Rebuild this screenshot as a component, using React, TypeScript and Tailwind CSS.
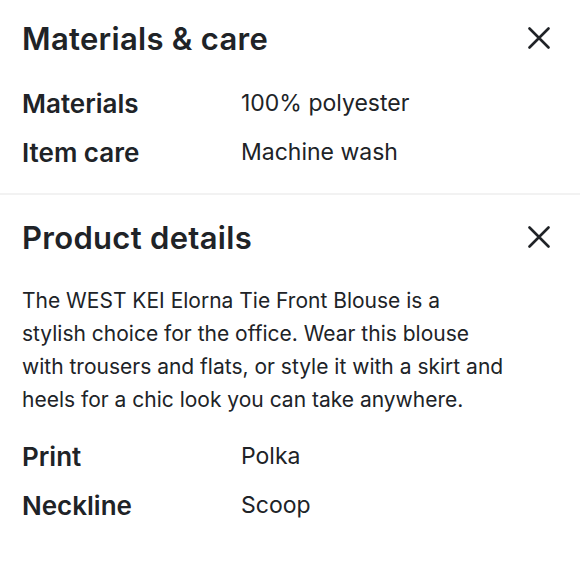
const font = { fontFamily: 'Inter, "Noto Sans", sans-serif' };

function CloseIcon() {
  return (
    <svg width="22" height="22" viewBox="0 0 22 22" className="text-[#202327]" fill="none">
      <path d="M1.5 1.5 L20.5 20.5 M20.5 1.5 L1.5 20.5" stroke="currentColor" strokeWidth="2.6" strokeLinecap="round" />
    </svg>
  );
}

function SpecRow({ label, value }: { label: string; value: string }) {
  return (
    <div className="flex items-center h-[49px]">
      <div className="w-[219px] text-[26px] font-semibold text-[#202327]">{label}</div>
      <div className="text-[23px] text-[#202327]">{value}</div>
    </div>
  );
}

function SectionHeader({ title }: { title: string }) {
  return (
    <div className="flex items-center justify-between h-[40px]">
      <h2 className="text-[31px] font-semibold tracking-[0.3px] text-[#202327] leading-none">{title}</h2>
      <CloseIcon />
    </div>
  );
}

export default function App() {
  return (
    <div className="w-[580px] h-[580px] bg-white overflow-hidden" style={font}>
      {/* Materials & care */}
      <section className="pl-[22px] pr-[30px] pt-[18px] pb-[16px]">
        <SectionHeader title="Materials & care" />
        <div className="mt-[21px]">
          <SpecRow label="Materials" value="100% polyester" />
          <SpecRow label="Item care" value="Machine wash" />
        </div>
      </section>

      <div className="h-[2px] bg-[#f2f2f2]" />

      {/* Product details */}
      <section className="pl-[22px] pr-[30px] pt-[22px]">
        <SectionHeader title="Product details" />
        <p className="mt-[27px] text-[21px] leading-[33px] text-[#202327]">
          The WEST KEI Elorna Tie Front Blouse is a<br />
          stylish choice for the office. Wear this blouse<br />
          with trousers and flats, or style it with a skirt and<br />
          heels for a chic look you can take anywhere.
        </p>
        <div className="mt-[16px]">
          <SpecRow label="Print" value="Polka" />
          <SpecRow label="Neckline" value="Scoop" />
        </div>
      </section>
    </div>
  );
}
